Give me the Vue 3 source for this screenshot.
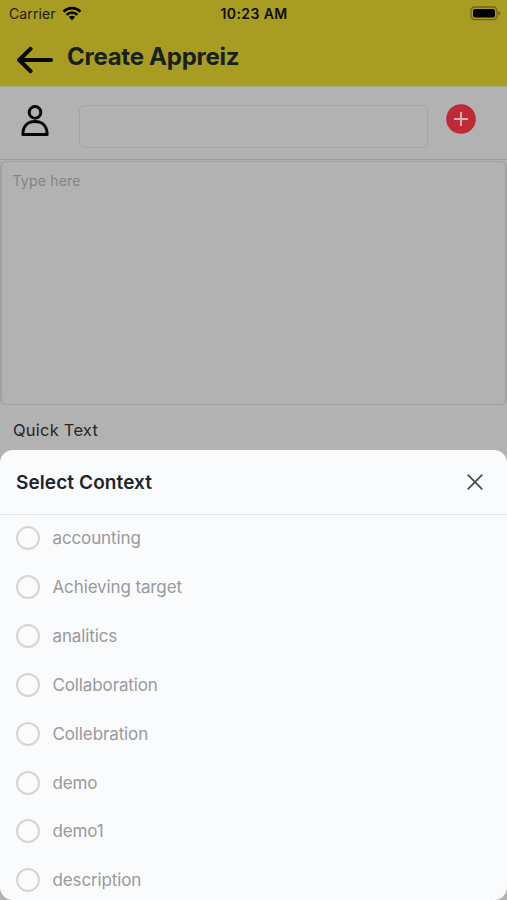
<script setup>
const contexts = [
  'accounting',
  'Achieving target',
  'analitics',
  'Collaboration',
  'Collebration',
  'demo',
  'demo1',
  'description',
]
</script>

<template>
  <div class="screen">
    <header class="top">
      <div class="status">
        <div class="carrier">
          <span>Carrier</span>
          <svg width="20" height="15" viewBox="0 0 20 15">
            <path d="M1.6 5.7 A11.8 11.8 0 0 1 18.4 5.7" fill="none" stroke="#000" stroke-width="2.7" />
            <path d="M4.7 8.8 A7.4 7.4 0 0 1 15.3 8.8" fill="none" stroke="#000" stroke-width="2.5" />
            <path d="M10 14.2 L6.9 11 A4.4 4.4 0 0 1 13.1 11 Z" fill="#000" />
          </svg>
        </div>
        <span class="time">10:23 AM</span>
        <svg class="battery" width="31" height="15" viewBox="0 0 31 15">
          <rect x="1" y="1" width="26" height="12.6" rx="3.8" fill="none" stroke="#6c641b" stroke-width="1.3" />
          <rect x="3" y="3" width="22" height="8.6" rx="2" fill="#000" />
          <path d="M28.4 5.2 Q30.2 5.7 30.2 7.3 Q30.2 8.9 28.4 9.4 Z" fill="#6c641b" />
        </svg>
      </div>
      <div class="nav">
        <svg width="38" height="28" viewBox="0 0 38 28" fill="none" stroke="#080a03" stroke-width="4" stroke-linecap="round" stroke-linejoin="round">
          <path d="M3.4 14 H35" />
          <path d="M14.6 2.8 L3.2 14 L14.6 25.2" />
        </svg>
        <h1><span class="title">Create Appreiz</span></h1>
      </div>
    </header>

    <section class="recipient">
      <svg class="person" width="28" height="32" viewBox="0 0 28 32" fill="none" stroke="#050505" stroke-width="3" stroke-linejoin="round">
        <circle cx="14" cy="7.4" r="5.8" />
        <path d="M1.9 29.6 C1.9 21.4 6.2 16.6 14 16.6 C21.8 16.6 26.1 21.4 26.1 29.6 Z" />
      </svg>
      <div class="field"></div>
      <svg class="add" width="30" height="30" viewBox="0 0 30 30">
        <circle cx="15" cy="15" r="14.8" fill="#be2a36" />
        <path d="M15 8 V22 M8 15 H22" stroke="#d3b3b6" stroke-width="1.9" fill="none" />
      </svg>
    </section>

    <section class="message"><span class="placeholder">Type here</span></section>
    <div class="quick"><span class="quick-text">Quick Text</span></div>

    <section class="sheet">
      <div class="sheet-head">
        <h2><span class="sheet-title">Select Context</span></h2>
        <svg width="16" height="16" viewBox="0 0 16 16" fill="none" stroke="#4b4d52" stroke-width="1.8" stroke-linecap="round">
          <path d="M1.2 1.2 L14.8 14.8 M14.8 1.2 L1.2 14.8" />
        </svg>
      </div>
      <ul>
        <li v-for="name in contexts" :key="name">
          <i class="radio"></i>
          <span class="label">{{ name }}</span>
        </li>
      </ul>
    </section>
  </div>
</template>

<style>
body {
  margin: 0;
  background: #b2b2b2;
}
</style>

<style scoped>
.screen {
  width: 507px;
  height: 900px;
  display: flex;
  flex-direction: column;
  overflow: hidden;
  background: #b2b2b2;
  font-family: Inter, 'Liberation Sans', sans-serif;
}
.screen svg {
  display: block;
  flex: none;
}
.top {
  height: 86px;
  flex: none;
  background: #a99c22;
  border-bottom: 1px solid #b2ad7c;
}
.status {
  height: 28px;
  display: grid;
  grid-template-columns: 1fr auto 1fr;
  align-items: center;
  padding: 0 8px 0 9px;
  font-size: 14px;
  line-height: 16px;
  color: #1b1a08;
}
.status span {
  margin-top: -1px;
}
.carrier {
  display: flex;
  align-items: center;
  gap: 6px;
  letter-spacing: 0.1px;
}
.carrier svg {
  margin-top: -2px;
}
.time {
  font-weight: 600;
  letter-spacing: 0.4px;
  color: #0e0d04;
}
.battery {
  justify-self: end;
  margin: -1px -2px 0 0;
}
.nav {
  height: 58px;
  display: flex;
  align-items: center;
  gap: 13px;
  padding-left: 16px;
}
.nav svg {
  margin-top: 5px;
}
h1,
h2 {
  margin: 0;
}
h1 {
  font-size: 24px;
  line-height: 30px;
  font-weight: 700;
  letter-spacing: -0.26px;
  color: #16201f;
  padding-bottom: 1px;
}
.recipient {
  height: 73px;
  flex: none;
  display: flex;
  align-items: flex-start;
  box-sizing: border-box;
  padding: 18px 31px 0 21px;
  border-bottom: 1px solid #9a9a9a;
}
.field {
  width: 349px;
  height: 43px;
  margin-left: 30px;
  box-sizing: border-box;
  border: 1px solid #a5a5a6;
  border-radius: 5px;
}
.add {
  margin-left: 18px;
  margin-top: -0.6px;
}
.message {
  height: 244px;
  flex: none;
  box-sizing: border-box;
  margin-top: 1px;
  padding: 10px 10.5px;
  border: 1px solid #a1a1a1;
  border-width: 1px 2px 1px 2px;
  border-radius: 6px;
  font-size: 14px;
  line-height: 17px;
  letter-spacing: 0.2px;
  color: #828283;
}
.quick {
  height: 45px;
  flex: none;
  padding-left: 13px;
  font-size: 16.5px;
  line-height: 51px;
  letter-spacing: 0.22px;
  color: #252628;
}
.sheet {
  height: 450px;
  flex: none;
  box-sizing: border-box;
  background: #fafbfd;
  border-radius: 13px;
  overflow: hidden;
}
.sheet-head {
  height: 65px;
  box-sizing: border-box;
  display: flex;
  align-items: center;
  justify-content: space-between;
  padding: 0 24px 0 16px;
  border-bottom: 1px solid #e3e4e6;
}
h2 {
  font-size: 19px;
  line-height: 26px;
  font-weight: 600;
  letter-spacing: 0.1px;
  color: #20242e;
  padding-top: 2px;
}
ul {
  list-style: none;
  margin: -1px 0 0;
  padding: 0 0 0 16px;
}
li {
  height: 48.85px;
  display: flex;
  align-items: center;
  gap: 12.5px;
  font-size: 17px;
  line-height: 24px;
  letter-spacing: -0.12px;
  color: #98999b;
}
.radio {
  width: 24px;
  height: 24px;
  box-sizing: border-box;
  border: 2px solid #d4d5d5;
  border-radius: 50%;
  background: #fbfbfa;
}
</style>
